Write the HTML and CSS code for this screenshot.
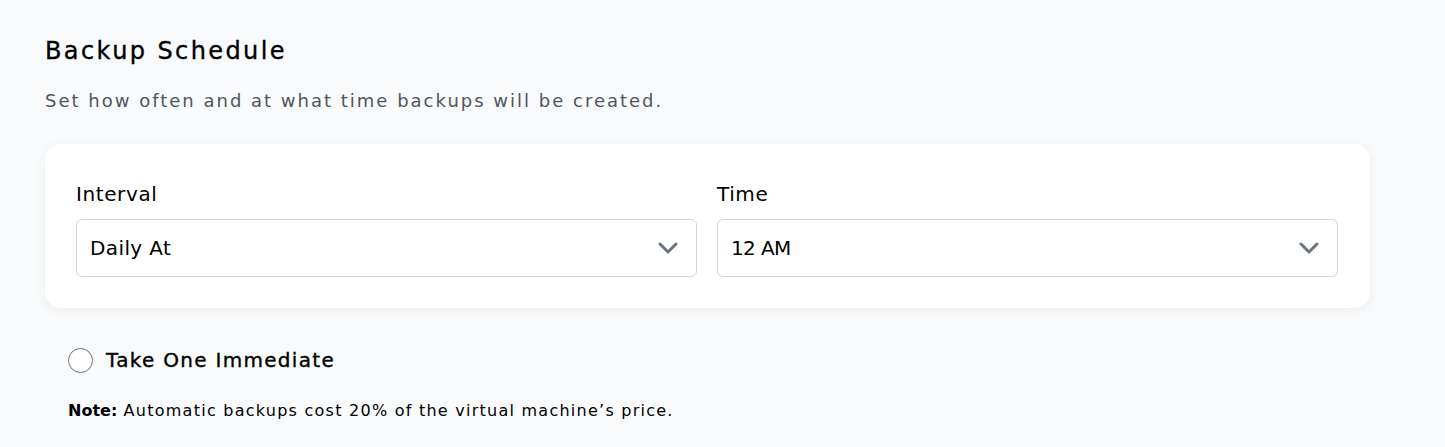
FILE: index.html
```html
<!DOCTYPE html>
<html lang="en">
<head>
<meta charset="utf-8">
<title>Backup Schedule</title>
<link rel="stylesheet" href="styles.css">
</head>
<body>
<section class="page">
  <h1 class="title">Backup Schedule</h1>
  <p class="subtitle">Set how often and at what time backups will be created.</p>
  <div class="card">
    <div class="field">
      <label class="label">Interval</label>
      <div class="select">
        <span class="value value-interval">Daily At</span>
        <svg class="chev" width="20" height="12" viewBox="0 0 20 12"><path d="M2 2l8 8 8-8" fill="none" stroke="#6b7280" stroke-width="3" stroke-linecap="round" stroke-linejoin="round"/></svg>
      </div>
    </div>
    <div class="field">
      <label class="label">Time</label>
      <div class="select">
        <span class="value value-time">12 AM</span>
        <svg class="chev" width="20" height="12" viewBox="0 0 20 12"><path d="M2 2l8 8 8-8" fill="none" stroke="#6b7280" stroke-width="3" stroke-linecap="round" stroke-linejoin="round"/></svg>
      </div>
    </div>
  </div>
  <div class="options">
    <label class="radio-row"><span class="radio"></span><span class="radio-text">Take One Immediate</span></label>
    <p class="note"><strong>Note:</strong> Automatic backups cost 20% of the virtual machine’s price.</p>
  </div>
</section>
</body>
</html>
```
FILE: styles.css
```css
* { box-sizing: border-box; }
html, body { margin: 0; padding: 0; }
body {
  background: #f9fafc;
  font-family: "DejaVu Sans", "Noto Sans", sans-serif;
  color: #000;
}
.page {
  padding: 33px 75px 0 45px;
}
.title {
  margin: 0;
  font-size: 24px;
  font-weight: 500;
  line-height: 36px;
  letter-spacing: 2.4px;
  -webkit-text-stroke: 0.35px #000;
  color: #000;
}
.subtitle {
  margin: 18px 0 0;
  font-size: 18px;
  line-height: 28px;
  letter-spacing: 2px;
  color: #50555e;
}
.card {
  margin-top: 29px;
  background: #fff;
  border-radius: 16px;
  box-shadow: 0 2px 12px rgba(0,0,0,0.06);
  padding: 35px 32px 31px 31px;
  display: grid;
  grid-template-columns: 1fr 1fr;
  gap: 20px;
}
.field { display: flex; flex-direction: column; gap: 10px; }
.label { font-size: 20px; line-height: 30px; letter-spacing: 0.6px; color: #000; }
.select {
  height: 58px;
  border: 1px solid #d4d6db;
  border-radius: 6px;
  display: flex;
  align-items: center;
  justify-content: space-between;
  padding: 0 18px 0 13px;
  font-size: 20px;
}
.value-interval { letter-spacing: 0.4px; }
.value-time { letter-spacing: -0.6px; }
.chev { display: block; }
.options { padding: 37px 0 0 23px; }
.radio-row { display: flex; align-items: center; gap: 13px; }
.radio {
  width: 25px; height: 25px;
  border: 1.5px solid #6b7280;
  border-radius: 50%;
  background: #fff;
}
.radio-text {
  font-size: 20px;
  font-weight: 500;
  line-height: 30px;
  letter-spacing: 1.3px;
  -webkit-text-stroke: 0.35px #000;
}
.note { margin: 24px 0 0; font-size: 16px; line-height: 24px; letter-spacing: 1.25px; }
.note strong { font-weight: 700; letter-spacing: 0; }
```
